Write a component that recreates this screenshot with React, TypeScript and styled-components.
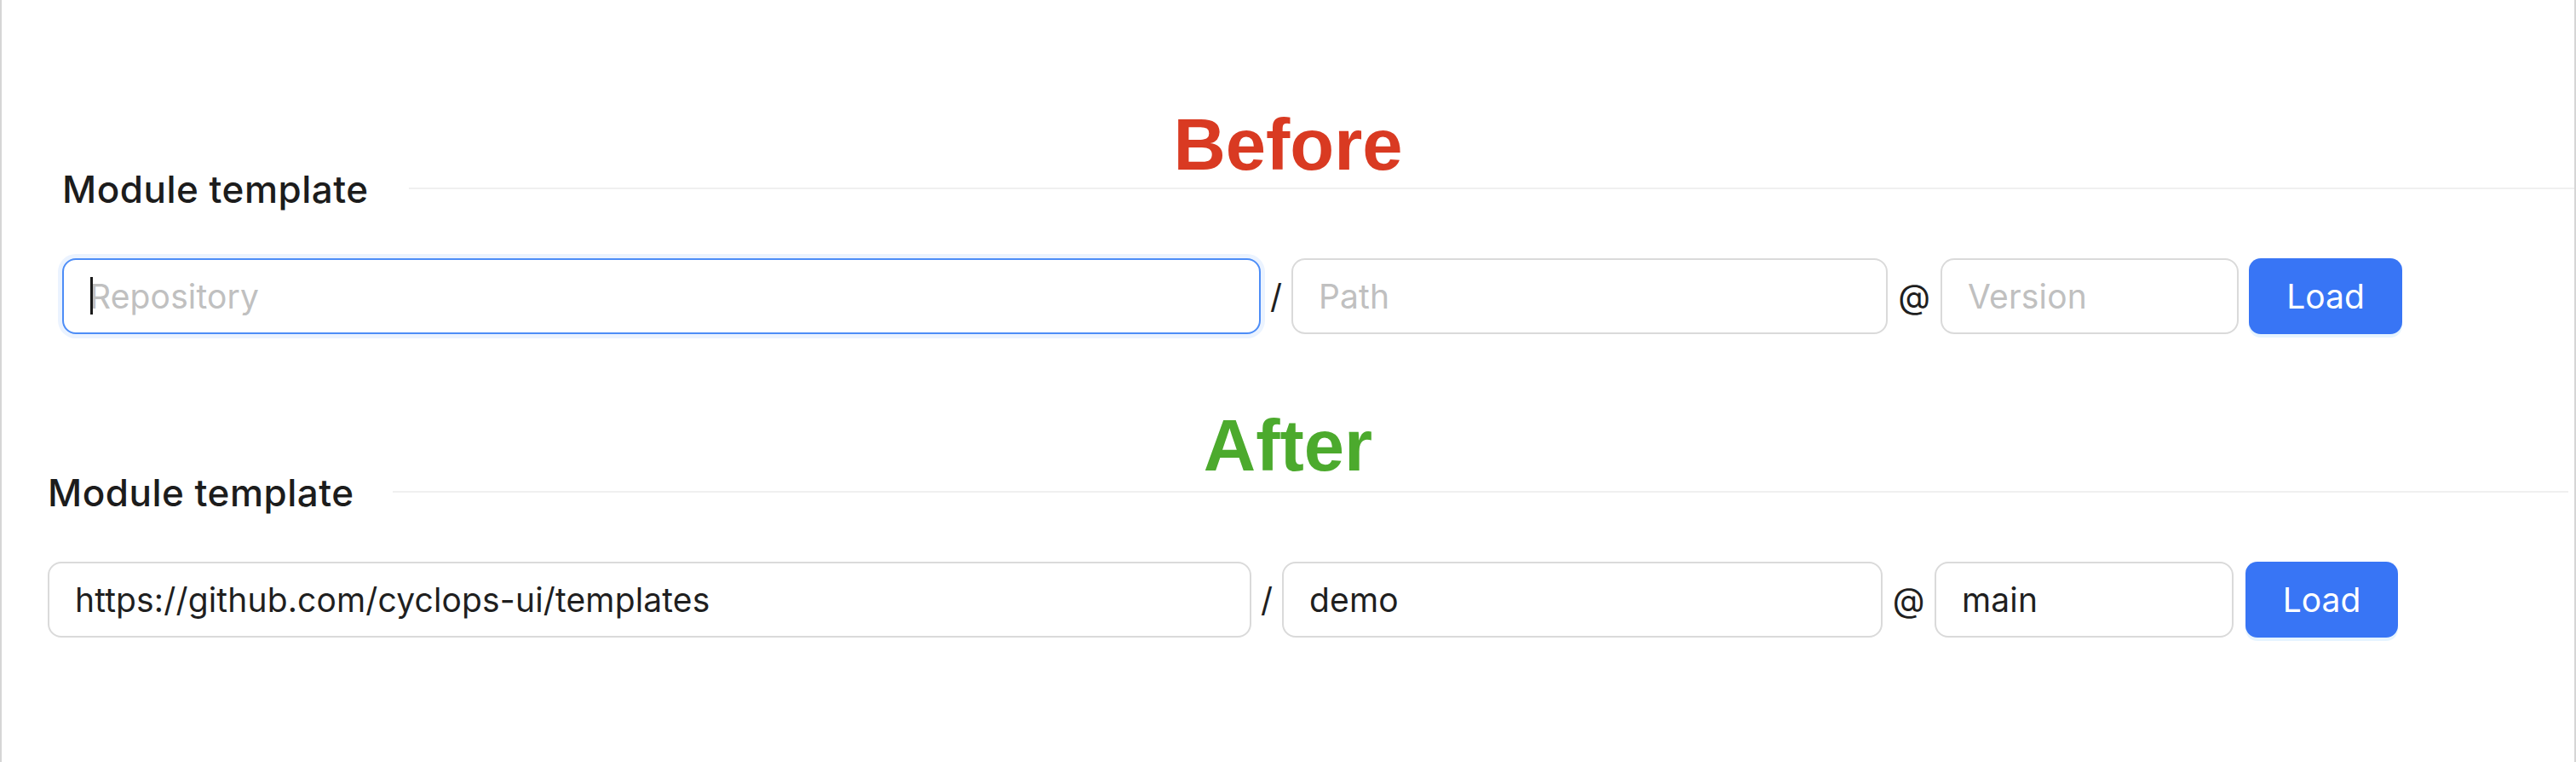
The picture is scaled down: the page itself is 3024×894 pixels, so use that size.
import React from 'react';
import styled, { createGlobalStyle } from 'styled-components';

interface FieldSpec {
  width: number;
  placeholder: string;
  value: string;
  focused?: boolean;
}

interface SectionSpec {
  title: string;
  color: string;
  top: number;
  lift: number;
  inset: number;
  endGap: number;
  ruleGap: number;
  fieldsTop: number;
  slashWidth: number;
  atWidth: number;
  buttonGap: number;
  buttonWidth: number;
  repo: FieldSpec;
  path: FieldSpec;
  version: FieldSpec;
}

const sections: SectionSpec[] = [
  {
    title: 'Before',
    color: '#d93a22',
    top: 0,
    lift: 15,
    inset: 71,
    endGap: 0,
    ruleGap: 47,
    fieldsTop: 57,
    slashWidth: 36,
    atWidth: 62,
    buttonGap: 12,
    buttonWidth: 180,
    repo: { width: 1407, placeholder: 'Repository', value: '', focused: true },
    path: { width: 700, placeholder: 'Path', value: '' },
    version: { width: 350, placeholder: 'Version', value: '' }
  },
  {
    title: 'After',
    color: '#4caa2d',
    top: 88,
    lift: 12,
    inset: 54,
    endGap: 7,
    ruleGap: 45,
    fieldsTop: 57,
    slashWidth: 36,
    atWidth: 61,
    buttonGap: 14,
    buttonWidth: 179,
    repo: { width: 1413, placeholder: 'Repository', value: 'https://github.com/cyclops-ui/templates' },
    path: { width: 705, placeholder: 'Path', value: 'demo' },
    version: { width: 351, placeholder: 'Version', value: 'main' }
  }
];

const Field = ({ spec }: { spec: FieldSpec }) => (
  <FieldWrap $width={ spec.width }>
    <TextInput
      $focused={ !!spec.focused }
      placeholder={ spec.placeholder }
      defaultValue={ spec.value }
      readOnly
    />
    { spec.focused && <Caret /> }
  </FieldWrap>
);

const TemplateSection = ({ spec }: { spec: SectionSpec }) => (
  <Section $top={ spec.top }>
    <Heading $color={ spec.color } $lift={ spec.lift }>
      { spec.title }
    </Heading>
    <Body $inset={ spec.inset } $endGap={ spec.endGap }>
      <LabelRow>
        <Label>Module template</Label>
        <Rule $gap={ spec.ruleGap } />
      </LabelRow>
      <FieldRow $top={ spec.fieldsTop }>
        <Field spec={ spec.repo } />
        <Sep $width={ spec.slashWidth }>/</Sep>
        <Field spec={ spec.path } />
        <Sep $width={ spec.atWidth }>@</Sep>
        <Field spec={ spec.version } />
        <LoadButton type="button" $gap={ spec.buttonGap } $width={ spec.buttonWidth }>
          Load
        </LoadButton>
      </FieldRow>
    </Body>
  </Section>
);

export default function App() {
  return (
    <>
      <GlobalStyle />
      <Page>
        {
          sections.map((s) => (
            <TemplateSection key={ s.title } spec={ s } />
          ))
        }
      </Page>
    </>
  );
}

const GlobalStyle = createGlobalStyle`
  html, body {
    margin: 0;
    padding: 0;
    background: #ffffff;
  }

  body {
    font-family: Inter, 'Noto Sans', sans-serif;
  }
`;

const Page = styled.div`
  box-sizing: border-box;
  width: 3024px;
  min-height: 894px;
  padding-top: 127px;
  border-left: 2px solid #d6d6d6;
  border-right: 2px solid #d6d6d6;
  background: #ffffff;
`;

const Section = styled.section<{ $top: number }>`
  margin-top: ${ (p) => p.$top }px;
`;

const Heading = styled.div<{ $color: string; $lift: number }>`
  font-family: 'Liberation Sans', Arial, sans-serif;
  font-weight: 700;
  font-size: 85px;
  line-height: 86px;
  text-align: center;
  color: ${ (p) => p.$color };
  margin-bottom: -${ (p) => p.$lift }px;
`;

const Body = styled.div<{ $inset: number; $endGap: number }>`
  padding-left: ${ (p) => p.$inset }px;
  padding-right: ${ (p) => p.$endGap }px;
`;

const LabelRow = styled.div`
  display: flex;
  align-items: center;
  height: 48px;
`;

const Label = styled.span`
  font-size: 44px;
  font-weight: 500;
  letter-spacing: 0.5px;
  line-height: 48px;
  color: #1c1c1c;
  white-space: nowrap;
`;

const Rule = styled.div<{ $gap: number }>`
  flex: 1;
  height: 2px;
  margin-left: ${ (p) => p.$gap }px;
  margin-top: -3px;
  background: #f0f0f0;
`;

const FieldRow = styled.div<{ $top: number }>`
  display: flex;
  align-items: center;
  margin-top: ${ (p) => p.$top }px;
`;

const FieldWrap = styled.div<{ $width: number }>`
  position: relative;
  width: ${ (p) => p.$width }px;
  flex: none;
`;

const TextInput = styled.input<{ $focused: boolean }>`
  box-sizing: border-box;
  display: block;
  width: 100%;
  height: 89px;
  padding: 0 30px;
  border: 2px solid ${ (p) => (p.$focused ? '#4d8df7' : '#dadada') };
  border-radius: 16px;
  box-shadow: ${ (p) => (p.$focused ? '0 0 0 5px #ebf3ff' : 'none') };
  background: #ffffff;
  font-family: Inter, 'Noto Sans', sans-serif;
  font-size: 39px;
  letter-spacing: 0.15px;
  color: #1f1f1f;
  outline: none;

  &::placeholder {
    color: #c0c0c0;
  }
`;

const Caret = styled.span`
  position: absolute;
  left: 33px;
  top: 22px;
  width: 3px;
  height: 44px;
  background: #1a1a1a;
`;

const Sep = styled.span<{ $width: number }>`
  flex: none;
  width: ${ (p) => p.$width }px;
  text-align: center;
  font-size: 39px;
  color: #1f1f1f;
`;

const LoadButton = styled.button<{ $gap: number; $width: number }>`
  flex: none;
  width: ${ (p) => p.$width }px;
  height: 89px;
  margin-left: ${ (p) => p.$gap }px;
  border: none;
  border-radius: 14px;
  background: #3875f5;
  box-shadow: 0 4px 0 rgba(5, 145, 255, 0.1);
  color: #ffffff;
  font-family: Inter, 'Noto Sans', sans-serif;
  font-size: 39px;
  cursor: pointer;
`;
